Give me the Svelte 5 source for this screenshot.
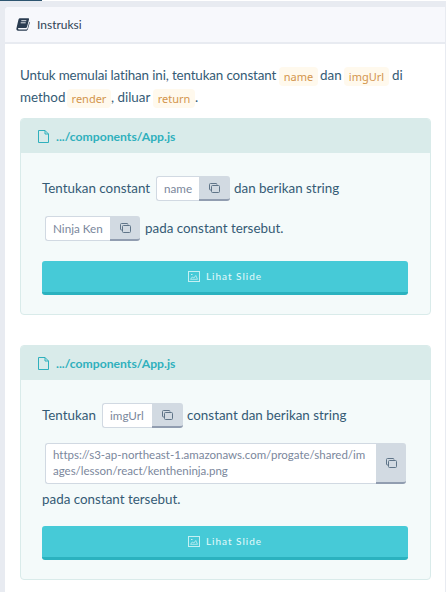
<script>
  const cards = [
    {
      path: '.../components/App.js',
      rows: [
        [{ text: 'Tentukan constant', w: 108 }, { copy: 'name', w: 74, box: 43, gap: 6 }, { text: 'dan berikan string', w: 107, gap: 4 }],
        [{ copy: 'Ninja Ken', w: 95, box: 65, gap: 3 }, { text: 'pada constant tersebut.', w: 139, gap: 5 }]
      ]
    },
    {
      path: '.../components/App.js',
      rows: [
        [{ text: 'Tentukan', w: 54 }, { copy: 'imgUrl', w: 81, box: 50, gap: 6 }, { text: 'constant dan berikan string', w: 161, gap: 4 }],
        [{ copy: 'https://s3-ap-northeast-1.amazonaws.com/progate/shared/images/lesson/react/kentheninja.png', w: 361, gap: 3, long: true }],
        [{ text: 'pada constant tersebut.', w: 139 }]
      ]
    }
  ];
</script>

<div class="page">
  <div class="topbar"><span></span></div>
  <main class="panel">
    <header>
      <svg class="book" width="14" height="13" viewBox="0 0 14 13">
        <path d="M4 .3h8c.8 0 1.2.5 1 1.2L11 9c-.2.7-.7 1.1-1.4 1.1H2.7c-1 0-1 1.3 0 1.3h7.5c.7 0 1.1-.3 1.3-.9l1.8-6.8c.5.3.6.8.4 1.4l-1.8 6.2c-.3.9-1 1.500-1.900 1.500H2.200C.7 12.800.1 11.500.5 10L2.500 1.500C2.700.700 3.200.300 4 .300Z" fill="#2b3d51" />
        <path d="M5.300 2.700h5M4.700 4.800h5" stroke="#f7f8fc" stroke-width=".9" />
      </svg>
      <span>Instruksi</span>
    </header>
    <section class="content">
      <div class="intro">
        <div class="line"><span class="t1">Untuk memulai latihan ini, tentukan constant</span><code style="width:39px;margin-left:3px">name</code><span class="t2">dan</span><code style="width:45px;margin-left:3px">imgUrl</code><span class="t3">di</span></div>
        <div class="line"><span class="t5">method</span><code style="width:44px;margin-left:4px">render</code><span class="t4">, diluar</span><code style="width:42px;margin-left:4px">return</code><span>.</span></div>
      </div>
      {#each cards as card}
        <article class="card">
          <div class="head">
            <svg width="11" height="13" viewBox="0 0 11 13" fill="none" stroke="#2fb0bd"><path d="M.5.5h6.500l3.500 3.500v8.500H.5ZM7 .5V4h3.500" /></svg>
            <span>{card.path}</span>
          </div>
          <div class="body">
            {#each card.rows as row}
              <div class="row" class:tall={row[0].long} class:plain={row.length === 1 && row[0].text}>
                {#each row as item}
                  {#if item.copy}
                    <div class="copy" class:long={item.long} style="width:{item.w}px;margin-left:{item.gap}px">
                      <div class="value">{item.copy}</div>
                      <button class="cp" aria-label="copy" style="width:{item.box ? item.w - item.box : 30}px">
                        <svg width="11" height="10" viewBox="0 0 11 10" fill="none" stroke="#5f7488"><path d="M2.500 7H1.500q-1 0-1-1V1.500q0-1 1-1h5.500q1 0 1 1" /><rect x="2.500" y="2.500" width="8" height="7" rx="1" /></svg>
                      </button>
                    </div>
                  {:else}
                    <span class="txt" style="width:{item.w}px;margin-left:{item.gap ?? 0}px">{item.text}</span>
                  {/if}
                {/each}
              </div>
            {/each}
            <button class="slide">
              <svg width="12" height="11" viewBox="0 0 12 11" fill="none" stroke="#c5f0f3"><rect x=".5" y=".5" width="11" height="10" /><path d="M2.500 8.300 4.300 6l1.600 1 1.900-2.500 1.700 3.800Z" stroke-width=".8" /><path d="M3 3.500h1.500" /></svg>
              <span>Lihat Slide</span>
            </button>
          </div>
        </article>
      {/each}
    </section>
  </main>
</div>

<style>
  :global(body) { margin: 0; overflow: hidden; }
  .page { box-sizing: border-box; width: 446px; height: 592px; overflow: hidden; background: #e8ebf1; font-family: Lato, "Liberation Sans", sans-serif; color: #355b75; font-size: 13.4px; white-space: nowrap; font-variant-ligatures: none; }
  .topbar { height: 1px; background: #fff; margin-bottom: 6px; }
  .topbar span { display: block; width: 42px; height: 1px; background: #2d5570; }
  .panel { margin: 0 1px 0 5px; height: 585px; background: #fff; border-radius: 4px 0 0 0; overflow: hidden; }
  header { box-sizing: border-box; height: 37px; border-bottom: 2px solid #e8ebf1; background: #f7f8fc; display: flex; align-items: center; padding-left: 11px; gap: 7px; font-size: 12px; color: #2f4356; }
  .content { padding: 21px 14px 0 15px; }
  .line { height: 22px; display: flex; align-items: center; }
  .line span { padding-bottom: 2px; flex-shrink: 0; }
  .line .t1 { width: 256px; letter-spacing: -.14px; }
  .line .t2 { width: 21px; }
  .line .t5 { width: 43px; }
  .line .t4 { width: 38px; }
  code { box-sizing: border-box; flex-shrink: 0; height: 19px; margin-top: 1px; background: #fff9ed; color: #d3954c; border-radius: 4px; font: 11px/20px "Noto Sans", sans-serif; text-align: center; }
  .t2, .t3 { margin-left: 2px; }
  .line .t3 { margin-left: 3px; }
  .txt { flex-shrink: 0; padding-bottom: 1px; }
  .card { box-sizing: border-box; border: 1px solid #d9ebea; border-radius: 4px; background: #f4fafa; margin-top: 9px; margin-bottom: 30px; overflow: hidden; }
  .card + .card { margin-top: 0; }
  .head { height: 34px; background: #d9ebea; display: flex; align-items: center; gap: 7px; padding-left: 17px; color: #2fb0bd; font-size: 12.2px; font-weight: 700; }
  .body { padding: 23px 22px 19px 21px; }
  .row { height: 25px; display: flex; align-items: center; margin-bottom: 15px; }
  .tall { height: 41px; }
  .plain { height: 14px; margin: -7px 0 0; }
  .copy { display: flex; height: 25px; flex-shrink: 0; }
  .value { box-sizing: border-box; flex: 1; background: #fff; border: 1px solid #d1d9e2; border-right: 0; border-radius: 3px 0 0 3px; font-size: 11.7px; line-height: 22px; color: #7b879c; padding-left: 7px; }
  .copy.long { height: 41px; }
  .long .value { white-space: normal; word-break: break-all; font-size: 11.500px; line-height: 16px; padding: 3px 7px 0; letter-spacing: -.01px; }
  .cp { box-sizing: border-box; display: flex; align-items: center; justify-content: center; padding: 0; border: 0; border-bottom: 2px solid #919db0; background: #d2dae2; border-radius: 0 3px 3px 0; }
  .slide { box-sizing: border-box; width: 100%; height: 34px; margin-top: 20px; padding: 0 0 1px; border: 0; border-bottom: 3px solid #2bb2bf; border-radius: 3px; background: #46cad7; color: #e4fafb; display: flex; align-items: center; justify-content: center; gap: 6px; font: 10px Lato, sans-serif; letter-spacing: 1px; }
</style>
